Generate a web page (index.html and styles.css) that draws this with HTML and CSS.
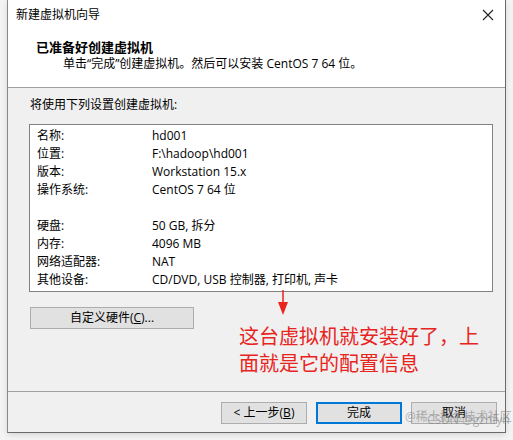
FILE: index.html
```html
<!DOCTYPE html>
<html>
<head>
<meta charset="utf-8">
<link rel="stylesheet" href="styles.css">
</head>
<body>
<div class="window">
  <div class="header">
    <div class="titlebar">
      <span class="title">新建虚拟机向导</span>
      <svg class="close" width="12" height="12" viewBox="0 0 12 12"><path d="M1 1 L11 11 M11 1 L1 11" stroke="#222" stroke-width="1.1" fill="none"/></svg>
    </div>
    <div class="h-title">已准备好创建虚拟机</div>
    <div class="h-sub">单击“完成”创建虚拟机。然后可以安装 CentOS 7 64 位。</div>
  </div>
  <div class="content">
    <div class="intro">将使用下列设置创建虚拟机:</div>
    <div class="box">
      <div class="row"><span class="k">名称:</span><span>hd001</span></div>
      <div class="row"><span class="k">位置:</span><span>F:\hadoop\hd001</span></div>
      <div class="row"><span class="k">版本:</span><span>Workstation 15.x</span></div>
      <div class="row"><span class="k">操作系统:</span><span>CentOS 7 64 位</span></div>
      <div class="row"></div>
      <div class="row"><span class="k">硬盘:</span><span>50 GB, 拆分</span></div>
      <div class="row"><span class="k">内存:</span><span>4096 MB</span></div>
      <div class="row"><span class="k">网络适配器:</span><span>NAT</span></div>
      <div class="row"><span class="k">其他设备:</span><span>CD/DVD, USB 控制器, 打印机, 声卡</span></div>
    </div>
    <div class="custom-row">
      <button class="btn custom">自定义硬件(<u>C</u>)...</button>
    </div>
    <div class="note">这台虚拟机就安装好了，上<br>面就是它的配置信息</div>
    <svg class="arrow" width="12" height="26" viewBox="0 0 12 26"><path d="M6 0 L6 14" stroke="#e8241e" stroke-width="1.5"/><path d="M1 12 L11 12 L6 25 Z" fill="#e8241e"/></svg>
  </div>
  <div class="footer">
    <button class="btn">&lt; 上一步(<u>B</u>)</button>
    <button class="btn primary">完成</button>
    <button class="btn">取消</button>
    <div class="wm"><span class="wm1">@稀土掘金技术社区</span><span class="wm2">CSDN @gzhfyh</span></div>
  </div>
</div>
</body>
</html>
```

FILE: styles.css
```css
html, body {
  margin: 0;
  padding: 0;
}
body {
  width: 513px;
  height: 440px;
  background: #f4f4f4;
  font-family: "Open Sans", "Noto Sans CJK SC", sans-serif;
  font-size: 12px;
  color: #000;
  overflow: hidden;
}
.window {
  box-sizing: border-box;
  margin-left: 7px;
  width: 499px;
  height: 433px;
  background: #f0f0f0;
  border-left: 1px solid #8a8a8a;
  border-right: 1px solid #6a6a6a;
  border-bottom: 1px solid #6a6a6a;
  box-shadow: 0 2px 6px rgba(0,0,0,0.12);
  position: relative;
}
.header {
  box-sizing: border-box;
  background: #fff;
  height: 88px;
  border-bottom: 1px solid #a0a0a0;
}
.titlebar {
  height: 30px;
  display: flex;
  align-items: center;
  justify-content: space-between;
  padding: 0 11px 0 8px;
}
.title {
  line-height: 30px;
}
.close {
  display: block;
}
.h-title {
  font-weight: bold;
  font-size: 13px;
  line-height: 18px;
  padding-left: 28px;
  margin-top: 8px;
}
.h-sub {
  line-height: 16px;
  padding-left: 55px;
}
.content {
  box-sizing: border-box;
  height: 304px;
  position: relative;
  padding: 8px 12px 0 21px;
  border-bottom: 1px solid #a0a0a0;
}
.intro {
  line-height: 18px;
  padding-left: 1px;
}
.box {
  margin-top: 10px;
  box-sizing: border-box;
  width: 464px;
  height: 168px;
  background: #fff;
  border: 1px solid #828282;
  padding: 2px 7px 0 7px;
}
.row {
  display: flex;
  height: 18px;
  line-height: 18px;
}
.k {
  width: 115px;
  flex: none;
}
.custom-row {
  margin-top: 15px;
}
.btn {
  font-family: "Open Sans", "Noto Sans CJK SC", sans-serif;
  font-size: 12px;
  color: #000;
  background: #e1e1e1;
  border: 1px solid #adadad;
  box-sizing: border-box;
  height: 22px;
  width: 86px;
  padding: 0;
  line-height: 20px;
}
.btn u {
  text-decoration: underline;
}
.custom {
  width: 164px;
  margin-left: 1px;
}
.primary {
  border: 2px solid #0078d7;
  line-height: 18px;
}
.note {
  position: absolute;
  left: 231px;
  top: 234px;
  color: #e8241e;
  font-family: "Noto Sans CJK SC", sans-serif;
  font-size: 20px;
  line-height: 27px;
  white-space: nowrap;
}
.arrow {
  position: absolute;
  left: 269px;
  top: 202px;
}
.footer {
  box-sizing: border-box;
  height: 40px;
  display: flex;
  align-items: flex-start;
  padding: 10px 0 0 213px;
  gap: 9px;
  position: relative;
}
.wm {
  position: absolute;
  left: 397px;
  top: 18px;
  width: 100px;
  height: 16px;
  color: rgba(120,120,120,0.55);
  font-size: 12px;
  white-space: nowrap;
}
.wm1, .wm2 {
  position: absolute;
  top: 0;
  line-height: 14px;
}
.wm1 { left: 0; }
.wm2 { left: 22px; top: 3px; }
```
